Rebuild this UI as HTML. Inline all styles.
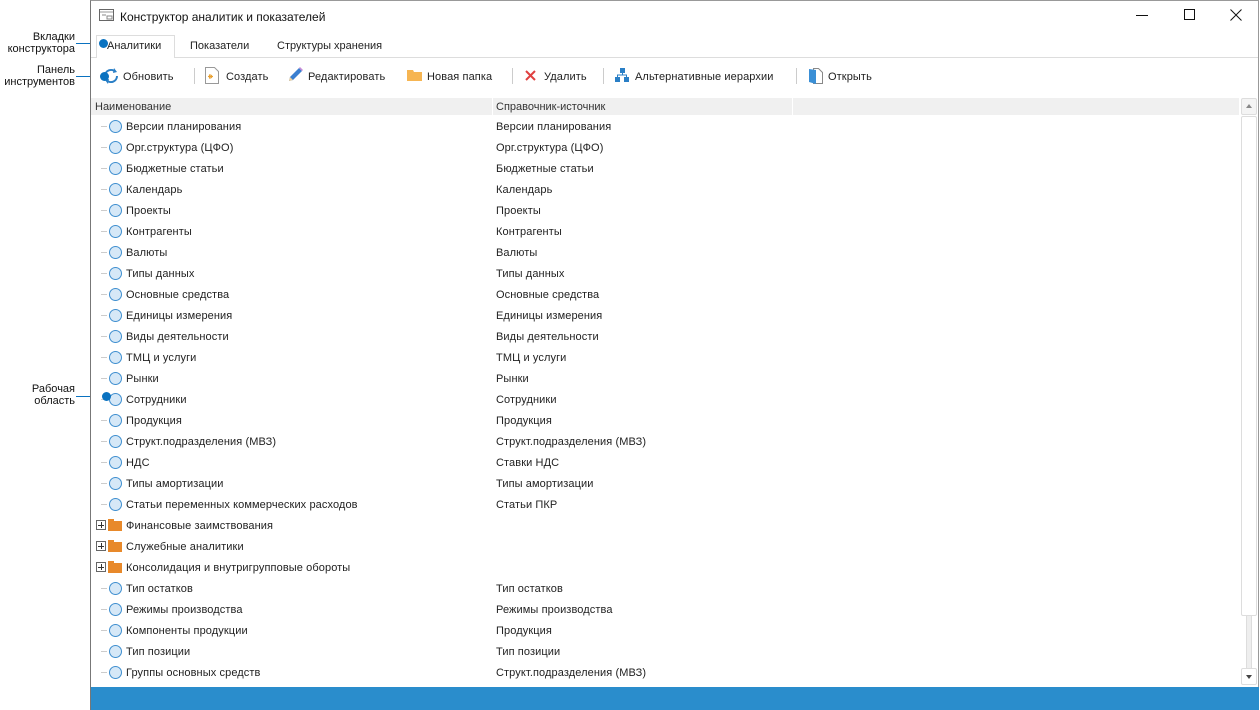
<!DOCTYPE html>
<html><head><meta charset="utf-8"><style>
*{margin:0;padding:0;box-sizing:border-box}
body{width:1260px;height:710px;background:#fff;position:relative;overflow:hidden;font-family:"Liberation Sans",sans-serif;font-size:11px;color:#222}
.a{position:absolute;white-space:nowrap}
.win{position:absolute;left:90px;top:0;width:1169px;height:710px;border-left:1px solid #777;border-right:1px solid #999;border-top:1px solid #999;background:#fff}
.lab{position:absolute;font-size:11px;color:#111;text-align:right;line-height:12px}
.line{position:absolute;height:1px;background:#0a72c0}
.dot{position:absolute;width:9px;height:9px;border-radius:50%;background:#0a72c0}
.row{position:absolute;left:0;height:21px;line-height:21px;width:1150px}
.row span{top:1px;letter-spacing:0.1px}
.circ{position:absolute;left:109px;top:4px;width:13px;height:13px;border-radius:50%;border:1.5px solid #3f8fd0;background:#d6e8f7}
.dash{position:absolute;left:101px;top:10px;width:6px;height:1px;background:#ccc}
.n{position:absolute;left:126px}
.s{position:absolute;left:496px}
.plus{position:absolute;left:96px;top:5px;width:10px;height:10px;border:1px solid #666;background:#fff}
.plus:before{content:"";position:absolute;left:1px;top:3.5px;width:6px;height:1px;background:#333}
.plus:after{content:"";position:absolute;left:3.5px;top:1px;width:1px;height:6px;background:#333}
.fold{position:absolute;left:108px;top:6px;width:14px;height:10px;background:#e8892a}
.fold:before{content:"";position:absolute;left:0;top:-2px;width:6px;height:3px;background:#e8892a}
.sep{position:absolute;top:68px;width:1px;height:16px;background:#ccc}
.tb{position:absolute;top:70px;line-height:14px;font-size:11px;letter-spacing:0.1px}
</style></head><body>
<div class="lab" style="left:0;top:31px;width:75px">Вкладки<br>конструктора</div>
<div class="line" style="left:76px;top:43px;width:28px"></div>
<div class="lab" style="left:0;top:64px;width:75px">Панель<br>инструментов</div>
<div class="line" style="left:76px;top:76px;width:28px"></div>
<div class="lab" style="left:0;top:383px;width:75px">Рабочая<br>область</div>
<div class="line" style="left:76px;top:396px;width:30px"></div>

<div class="win"></div>
<svg class="a" style="left:99px;top:9px" width="15" height="12"><rect x="0.5" y="0.5" width="14" height="11" fill="#fff" stroke="#666"/><line x1="1" y1="3" x2="14" y2="3" stroke="#999"/><line x1="3" y1="6" x2="7" y2="6" stroke="#888"/><rect x="8" y="7" width="5" height="3" fill="none" stroke="#888"/></svg>
<div class="a" style="left:120px;top:10px;font-size:12px;color:#111">Конструктор аналитик и показателей</div>
<div class="a" style="left:1136px;top:15px;width:12px;height:1px;background:#111"></div>
<div class="a" style="left:1184px;top:9px;width:11px;height:11px;border:1px solid #111"></div>
<svg class="a" style="left:1230px;top:9px" width="12" height="12"><path d="M0.5 0.5L11.5 11.5M11.5 0.5L0.5 11.5" stroke="#111"/></svg>
<div class="a" style="left:91px;top:57px;width:1167px;height:1px;background:#ddd"></div>
<div class="a" style="left:96px;top:35px;width:79px;height:23px;border:1px solid #ddd;border-bottom:none;background:#fff"></div>
<div class="a" style="left:107px;top:40px">Аналитики</div>
<div class="a" style="left:190px;top:40px">Показатели</div>
<div class="a" style="left:277px;top:40px">Структуры хранения</div>
<svg class="a" style="left:102px;top:67px" width="18" height="18"><path d="M3 9a6 6 0 0 1 10.5-4" fill="none" stroke="#2a7fc6" stroke-width="2"/><path d="M15 9a6 6 0 0 1-10.5 4" fill="none" stroke="#2a7fc6" stroke-width="2"/><path d="M12 1l3 4-4 1z" fill="#2a7fc6"/><path d="M6 17l-3-4 4-1z" fill="#2a7fc6"/></svg>
<div class="tb" style="left:123px">Обновить</div>
<div class="sep" style="left:194px"></div>
<svg class="a" style="left:205px;top:67px" width="14" height="17"><path d="M0.5 0.5h9l4 4v12H0.5z" fill="#fff" stroke="#999"/><path d="M5 7v5M3 9.5h5M4 8l3 3M7 8l-3 3" stroke="#e8a030"/></svg>
<div class="tb" style="left:226px">Создать</div>
<svg class="a" style="left:287px;top:67px" width="16" height="16"><path d="M2 14l1-4 9-9 3 3-9 9z" fill="#3b7fd0"/><path d="M12 1l3 3 1-1-3-3z" fill="#c88ad8"/><path d="M2 14l1-4 3 3z" fill="#f1d19a"/></svg>
<div class="tb" style="left:308px">Редактировать</div>
<svg class="a" style="left:407px;top:69px" width="15" height="12"><path d="M0 1h6l1 2h8v9H0z" fill="#f6b552"/></svg>
<div class="tb" style="left:427px">Новая папка</div>
<div class="sep" style="left:512px"></div>
<svg class="a" style="left:525px;top:70px" width="11" height="11"><path d="M1 1l9 9M10 1l-9 9" stroke="#e04040" stroke-width="2"/></svg>
<div class="tb" style="left:544px">Удалить</div>
<div class="sep" style="left:603px"></div>
<svg class="a" style="left:615px;top:68px" width="14" height="14"><rect x="5" y="0" width="5" height="5" fill="#2a7fc6"/><rect x="0" y="9" width="5" height="5" fill="#2a7fc6"/><rect x="9" y="9" width="5" height="5" fill="#2a7fc6"/><path d="M7.5 5v2M2.5 9V7h9v2" fill="none" stroke="#2a7fc6"/></svg>
<div class="tb" style="left:635px">Альтернативные иерархии</div>
<div class="sep" style="left:796px"></div>
<svg class="a" style="left:809px;top:67px" width="14" height="17"><path d="M4.5 1.5h5l4 4v11h-9z" fill="#fff" stroke="#888"/><path d="M0 2l7 1v14L0 15z" fill="#3a8fd6"/></svg>
<div class="tb" style="left:828px">Открыть</div>
<div class="a" style="left:91px;top:98px;width:1148px;height:17px;background:#f0f0f0"></div>
<div class="a" style="left:492px;top:98px;width:1px;height:17px;background:#fff"></div>
<div class="a" style="left:792px;top:98px;width:1px;height:17px;background:#fff"></div>
<div class="a" style="left:95px;top:101px;color:#333">Наименование</div>
<div class="a" style="left:496px;top:101px;color:#333">Справочник-источник</div>
<div class="a" style="left:1241px;top:98px;width:16px;height:17px;border:1px solid #ddd;border-radius:2px;background:#f4f4f4"></div>
<div class="a" style="left:1246px;top:104px;width:0;height:0;border-left:3px solid transparent;border-right:3px solid transparent;border-bottom:4px solid #888"></div>
<div class="a" style="left:1246px;top:116px;width:6px;height:553px;background:#eee;border:1px solid #ddd"></div>
<div class="a" style="left:1241px;top:116px;width:16px;height:500px;border:1px solid #ddd;border-radius:2px;background:#fff"></div>
<div class="a" style="left:1241px;top:668px;width:16px;height:17px;border:1px solid #ddd;border-radius:2px;background:#fff"></div>
<div class="a" style="left:1246px;top:675px;width:0;height:0;border-left:3px solid transparent;border-right:3px solid transparent;border-top:4px solid #444"></div>
<div class="a" style="left:91px;top:687px;width:1168px;height:23px;background:#2a8dcc"></div>
<div class="row" style="top:116px"><div class="dash"></div><div class="circ"></div><span class="n">Версии планирования</span><span class="s">Версии планирования</span></div>
<div class="row" style="top:137px"><div class="dash"></div><div class="circ"></div><span class="n">Орг.структура (ЦФО)</span><span class="s">Орг.структура (ЦФО)</span></div>
<div class="row" style="top:158px"><div class="dash"></div><div class="circ"></div><span class="n">Бюджетные статьи</span><span class="s">Бюджетные статьи</span></div>
<div class="row" style="top:179px"><div class="dash"></div><div class="circ"></div><span class="n">Календарь</span><span class="s">Календарь</span></div>
<div class="row" style="top:200px"><div class="dash"></div><div class="circ"></div><span class="n">Проекты</span><span class="s">Проекты</span></div>
<div class="row" style="top:221px"><div class="dash"></div><div class="circ"></div><span class="n">Контрагенты</span><span class="s">Контрагенты</span></div>
<div class="row" style="top:242px"><div class="dash"></div><div class="circ"></div><span class="n">Валюты</span><span class="s">Валюты</span></div>
<div class="row" style="top:263px"><div class="dash"></div><div class="circ"></div><span class="n">Типы данных</span><span class="s">Типы данных</span></div>
<div class="row" style="top:284px"><div class="dash"></div><div class="circ"></div><span class="n">Основные средства</span><span class="s">Основные средства</span></div>
<div class="row" style="top:305px"><div class="dash"></div><div class="circ"></div><span class="n">Единицы измерения</span><span class="s">Единицы измерения</span></div>
<div class="row" style="top:326px"><div class="dash"></div><div class="circ"></div><span class="n">Виды деятельности</span><span class="s">Виды деятельности</span></div>
<div class="row" style="top:347px"><div class="dash"></div><div class="circ"></div><span class="n">ТМЦ и услуги</span><span class="s">ТМЦ и услуги</span></div>
<div class="row" style="top:368px"><div class="dash"></div><div class="circ"></div><span class="n">Рынки</span><span class="s">Рынки</span></div>
<div class="row" style="top:389px"><div class="dash"></div><div class="circ"></div><span class="n">Сотрудники</span><span class="s">Сотрудники</span></div>
<div class="row" style="top:410px"><div class="dash"></div><div class="circ"></div><span class="n">Продукция</span><span class="s">Продукция</span></div>
<div class="row" style="top:431px"><div class="dash"></div><div class="circ"></div><span class="n">Структ.подразделения (МВЗ)</span><span class="s">Структ.подразделения (МВЗ)</span></div>
<div class="row" style="top:452px"><div class="dash"></div><div class="circ"></div><span class="n">НДС</span><span class="s">Ставки НДС</span></div>
<div class="row" style="top:473px"><div class="dash"></div><div class="circ"></div><span class="n">Типы амортизации</span><span class="s">Типы амортизации</span></div>
<div class="row" style="top:494px"><div class="dash"></div><div class="circ"></div><span class="n">Статьи переменных коммерческих расходов</span><span class="s">Статьи ПКР</span></div>
<div class="row" style="top:515px"><div class="plus"></div><div class="fold"></div><span class="n">Финансовые заимствования</span></div>
<div class="row" style="top:536px"><div class="plus"></div><div class="fold"></div><span class="n">Служебные аналитики</span></div>
<div class="row" style="top:557px"><div class="plus"></div><div class="fold"></div><span class="n">Консолидация и внутригрупповые обороты</span></div>
<div class="row" style="top:578px"><div class="dash"></div><div class="circ"></div><span class="n">Тип остатков</span><span class="s">Тип остатков</span></div>
<div class="row" style="top:599px"><div class="dash"></div><div class="circ"></div><span class="n">Режимы производства</span><span class="s">Режимы производства</span></div>
<div class="row" style="top:620px"><div class="dash"></div><div class="circ"></div><span class="n">Компоненты продукции</span><span class="s">Продукция</span></div>
<div class="row" style="top:641px"><div class="dash"></div><div class="circ"></div><span class="n">Тип позиции</span><span class="s">Тип позиции</span></div>
<div class="row" style="top:662px"><div class="dash"></div><div class="circ"></div><span class="n">Группы основных средств</span><span class="s">Структ.подразделения (МВЗ)</span></div>
<div class="dot" style="left:99px;top:39px"></div>
<div class="dot" style="left:100px;top:72px"></div>
<div class="dot" style="left:102px;top:392px"></div>
</body></html>
